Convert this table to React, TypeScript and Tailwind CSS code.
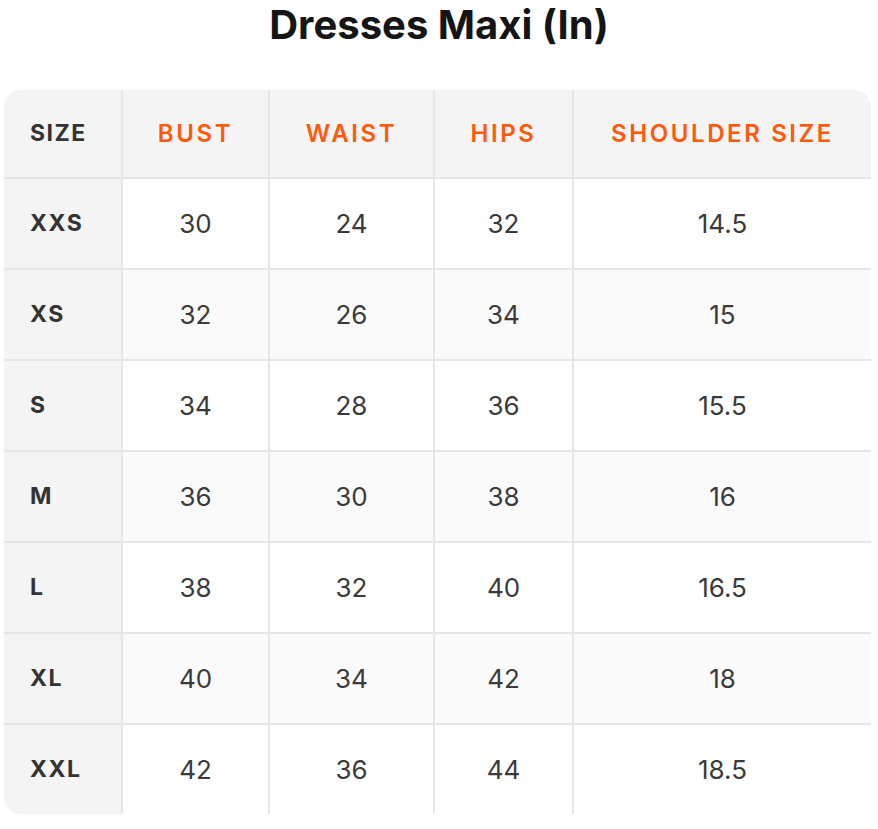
const headers = ['BUST', 'WAIST', 'HIPS', 'SHOULDER SIZE']

const rows: [string, string, string, string, string][] = [
  ['XXS', '30', '24', '32', '14.5'],
  ['XS', '32', '26', '34', '15'],
  ['S', '34', '28', '36', '15.5'],
  ['M', '36', '30', '38', '16'],
  ['L', '38', '32', '40', '16.5'],
  ['XL', '40', '34', '42', '18'],
  ['XXL', '42', '36', '44', '18.5'],
]

export default function App() {
  return (
    <div className="w-[878px] h-[829px] bg-white font-['Inter',sans-serif] text-[#333]">
      <h1 className="text-center text-[40px] font-bold leading-[49px] text-[#151515]">Dresses Maxi (In)</h1>

      <div className="mt-[41px] ml-[4px] w-[867px] rounded-[18px] overflow-hidden bg-[#e6e6e6]">
        <div className="grid grid-cols-[117px_145px_163px_137px_297px] gap-[2px]">
          {/* header row */}
          <div className="h-[87px] bg-[#f4f4f4] flex items-center pl-[26px] text-[23px] font-bold tracking-[1.5px]">SIZE</div>
          {headers.map(h => (
            <div
              key={h}
              className="h-[87px] bg-[#f4f4f4] flex items-center justify-center text-[24px] font-semibold tracking-[2.6px] text-[#ff5a0a]"
            >
              {h}
            </div>
          ))}

          {rows.map((row, i) => {
            const bg = i % 2 === 1 ? 'bg-[#fafafa]' : 'bg-white'
            return [
              <div
                key={row[0]}
                className="h-[89px] bg-[#f4f4f4] flex items-center pl-[26px] text-[23px] font-bold tracking-[1.5px]"
              >
                {row[0]}
              </div>,
              ...row.slice(1).map((v, j) => (
                <div
                  key={row[0] + j}
                  className={`h-[89px] ${bg} flex items-center justify-center text-[26px] text-[#3a3a3a]`}
                >
                  {v}
                </div>
              )),
            ]
          })}
        </div>
      </div>
    </div>
  )
}
